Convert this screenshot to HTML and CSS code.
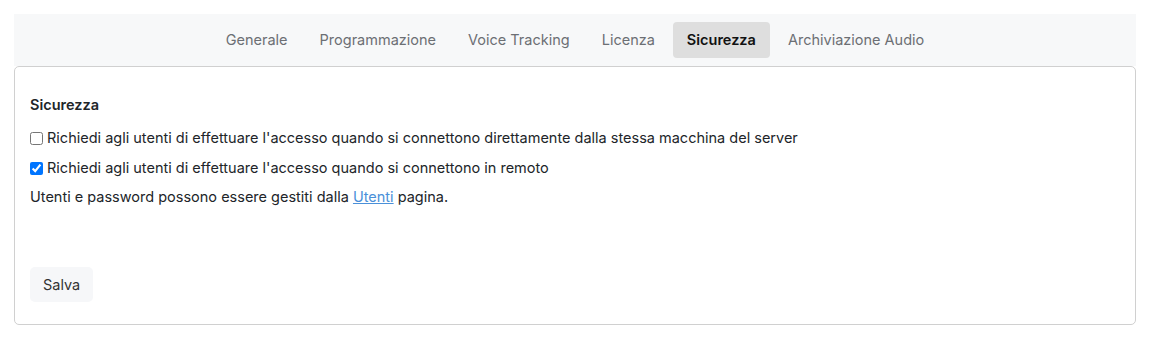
FILE: index.html
```html
<!DOCTYPE html>
<html lang="it">
<head>
    <meta charset="UTF-8">
    <title>Impostazioni - Sicurezza</title>
    <link rel="stylesheet" href="styles.css">
</head>
<body>
    <div class="page">
        <nav class="tabs">
            <a class="tab" href="#">Generale</a>
            <a class="tab" href="#">Programmazione</a>
            <a class="tab" href="#">Voice Tracking</a>
            <a class="tab" href="#">Licenza</a>
            <a class="tab active" href="#">Sicurezza</a>
            <a class="tab" href="#">Archiviazione Audio</a>
        </nav>
        <div class="card">
            <h2>Sicurezza</h2>
            <label class="check">
                <input type="checkbox">
                Richiedi agli utenti di effettuare l'accesso quando si connettono direttamente dalla stessa macchina del server
            </label>
            <label class="check">
                <input type="checkbox" checked>
                Richiedi agli utenti di effettuare l'accesso quando si connettono in remoto
            </label>
            <p class="note">Utenti e password possono essere gestiti dalla <a href="#">Utenti</a> pagina.</p>
            <button class="save">Salva</button>
        </div>
    </div>
</body>
</html>
```

FILE: styles.css
```css
body {
    margin: 0;
    padding: 14px;
    font-family: Inter, "Open Sans", sans-serif;
    font-size: 14.5px;
    color: #212529;
    background-color: white;
}
.tabs {
    display: flex;
    justify-content: center;
    gap: 4px;
    padding: 8px 0;
    background-color: #f7f8f9;
}
.tab {
    padding: 8px 14px;
    border-radius: 4px;
    color: #6c6f74;
    text-decoration: none;
    line-height: 20px;
}
.tab.active {
    background-color: #dedede;
    color: #111;
    font-weight: 600;
}
.card {
    border: 1px solid #d0d0d0;
    border-radius: 5px;
    padding: 22px 15px 22px;
}
h2 {
    font-size: 14.5px;
    font-weight: 600;
    margin: 6px 0 13px;
    line-height: 20px;
}
.check {
    display: flex;
    align-items: center;
    gap: 4px;
    line-height: 20px;
    margin-bottom: 10px;
}
.check input {
    margin: 0;
    width: 13px;
    height: 13px;
}
.note {
    margin: -1px 0 60px;
    line-height: 20px;
}
.note a {
    color: #4a90d9;
}
.save {
    font-family: inherit;
    font-size: 14.5px;
    color: #333;
    background-color: #f6f7f9;
    border: none;
    border-radius: 5px;
    padding: 8px 13px;
    line-height: 19px;
    cursor: pointer;
}
```
